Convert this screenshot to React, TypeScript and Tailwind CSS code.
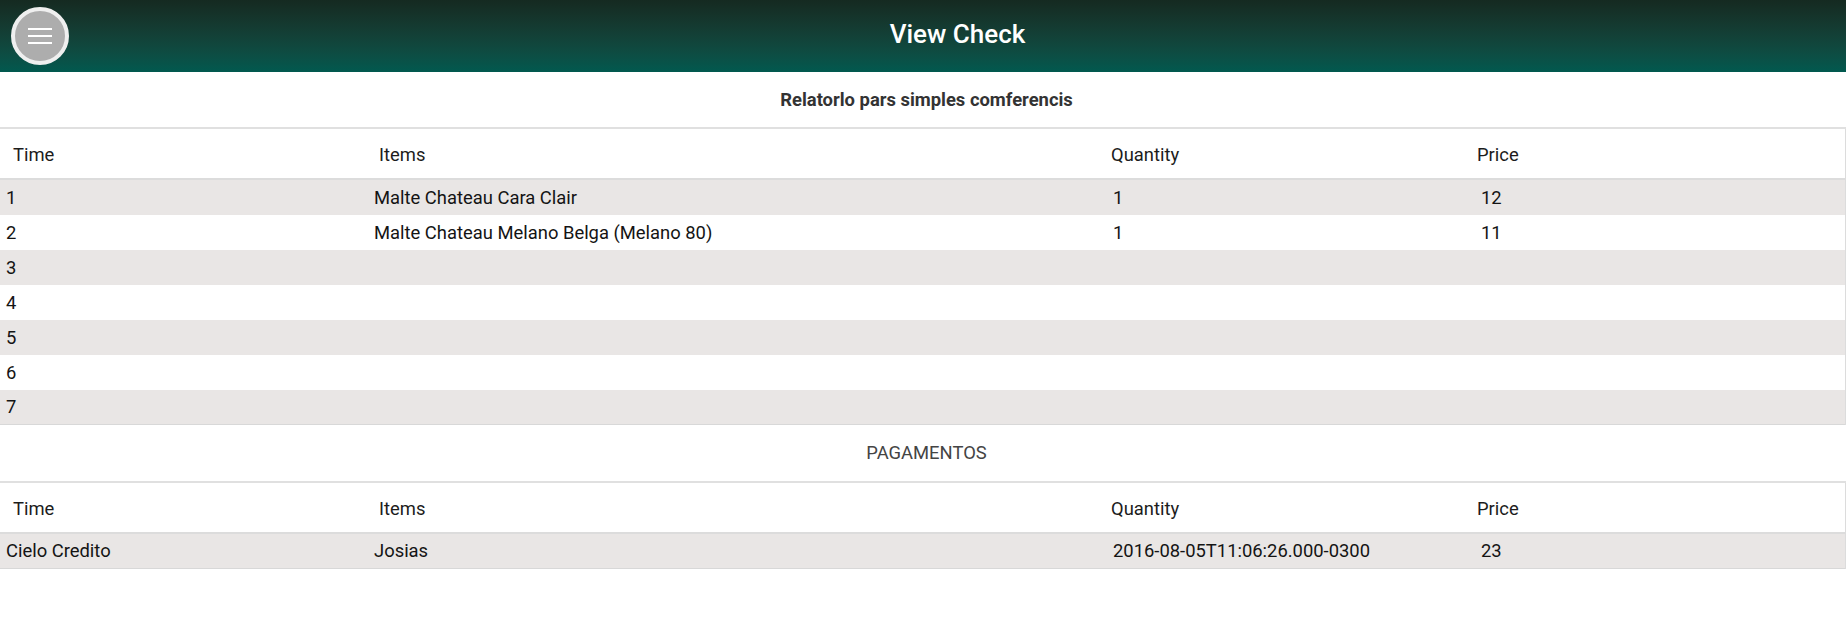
import React from 'react';

const items = [
  { time: '1', item: 'Malte Chateau Cara Clair', qty: '1', price: '12' },
  { time: '2', item: 'Malte Chateau Melano Belga (Melano 80)', qty: '1', price: '11' },
  { time: '3', item: '', qty: '', price: '' },
  { time: '4', item: '', qty: '', price: '' },
  { time: '5', item: '', qty: '', price: '' },
  { time: '6', item: '', qty: '', price: '' },
  { time: '7', item: '', qty: '', price: '' },
];

const payments = [
  { time: 'Cielo Credito', item: 'Josias', qty: '2016-08-05T11:06:26.000-0300', price: '23' },
];

type Row = { time: string; item: string; qty: string; price: string };

const HeaderRow: React.FC = () => (
  <div className="grid h-[51px] grid-cols-[366px_732px_366px_1fr] items-center border-b-2 border-[#dcdcdc] pl-[13px] pt-[3px] text-[18.4px] text-[#1c1c1c]">
    <span>Time</span>
    <span>Items</span>
    <span>Quantity</span>
    <span>Price</span>
  </div>
);

const DataRows: React.FC<{ rows: Row[] }> = ({ rows }) => (
  <div>
    {rows.map((r, i) => (
      <div
        key={i}
        className={`grid h-[35px] grid-cols-[368px_739px_368px_1fr] items-center pl-[6px] text-[18.4px] text-[#141414] ${
          i % 2 === 0 ? 'bg-[#e9e6e5]' : 'bg-white'
        } ${i === rows.length - 1 ? 'border-b border-[#d8d8d8]' : ''}`}
      >
        <span>{r.time}</span>
        <span>{r.item}</span>
        <span>{r.qty}</span>
        <span>{r.price}</span>
      </div>
    ))}
  </div>
);

const App: React.FC = () => {
  return (
    <div className="min-h-screen bg-white font-['Roboto',sans-serif]">
      {/* Top bar */}
      <header className="flex h-[72px] items-center bg-linear-to-b from-[#152a21] to-[#01594f] pl-[11px]">
        <button className="flex size-[58px] flex-col items-center justify-center gap-[5px] rounded-full border-4 border-[#efefef] bg-[#adadad]">
          <span className="h-[2px] w-6 bg-white" />
          <span className="h-[2px] w-6 bg-white" />
          <span className="h-[2px] w-6 bg-white" />
        </button>
        <h1 className="flex-1 pb-[4px] text-center text-[26px] font-medium text-white">View Check</h1>
      </header>

      {/* Items */}
      <div className="flex h-[57px] items-center justify-center border-b-2 border-[#e0e0e0] pl-[7px] text-[18.4px] font-bold text-[#333333]">
        Relatorlo pars simples comferencis
      </div>
      <div className="border-r border-[#dcdcdc]">
        <HeaderRow />
        <DataRows rows={items} />
      </div>

      {/* Payments */}
      <div className="flex h-[58px] items-center justify-center border-b-2 border-[#e0e0e0] pl-[7px] text-[18.4px] text-[#444444]">
        PAGAMENTOS
      </div>
      <div className="border-r border-[#dcdcdc]">
        <HeaderRow />
        <DataRows rows={payments} />
      </div>
    </div>
  );
};

export default App;
